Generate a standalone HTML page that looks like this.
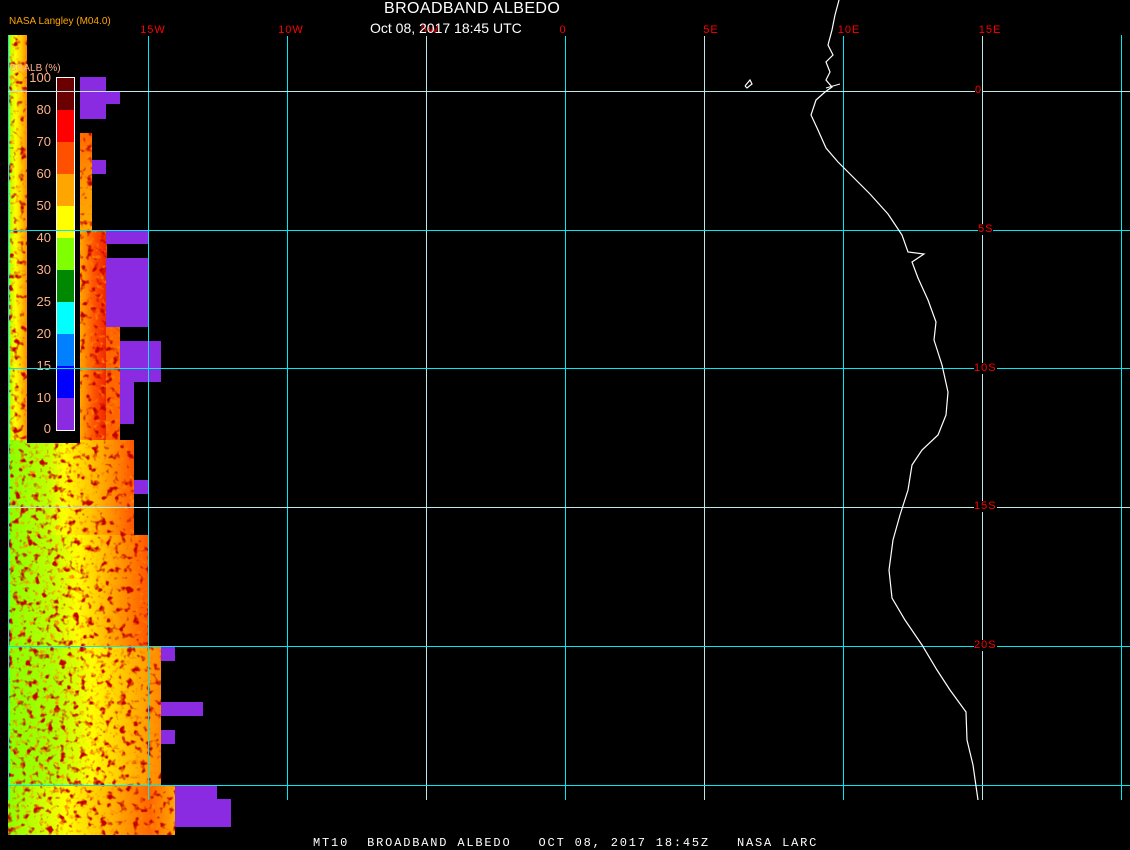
<!DOCTYPE html>
<html><head><meta charset="utf-8"><style>
html,body{margin:0;padding:0;background:#000;}
body{width:1130px;height:850px;position:relative;overflow:hidden;font-family:"Liberation Sans",sans-serif;}
.a{position:absolute;}
.v{position:absolute;top:35px;height:765px;width:1px;}
.h{position:absolute;left:8px;right:0;height:1px;}
.c{background:#00e8f0;}
.l{background:#b8e8ec;}
.lab{position:absolute;color:#f00;font-size:11px;background:#000;line-height:11px;transform:translateX(-50%);letter-spacing:1px;}
.rl{position:absolute;color:#f00;font-size:11px;background:#000;line-height:11px;letter-spacing:1px;}
.pu{position:absolute;background:#8a2be2;}
.leg div{height:32px;}
.ln{position:absolute;color:#ffb088;font-size:13px;text-align:right;width:32px;left:19px;}
</style></head><body>
<div class="a" style="left:8px;top:35px;width:19px;height:405px;background:linear-gradient(90deg,#9f0,#ff0 40%,#fc0 70%,#f80);"></div>
<div class="a" style="left:80px;top:133px;width:12px;height:100px;background:linear-gradient(#f60,#f90 50%,#fa0);"></div>
<div class="a" style="left:80px;top:230px;width:27px;height:210px;background:linear-gradient(90deg,#fa0,#f50 50%,#e20);"></div>
<div class="a" style="left:106px;top:327px;width:14px;height:113px;background:#f60;"></div>
<div class="a" style="left:8px;top:440px;width:126px;height:96px;background:linear-gradient(90deg,#8f0,#bf0 30%,#ff0 45%,#fa0 75%,#f50);"></div>
<div class="a" style="left:8px;top:535px;width:140px;height:112px;background:linear-gradient(90deg,#8f0,#bf0 30%,#ff0 50%,#fa0 75%,#f50);"></div>
<div class="a" style="left:8px;top:646px;width:153px;height:140px;background:linear-gradient(90deg,#8f0,#af0 30%,#ff0 55%,#fb0 80%,#f80);"></div>
<div class="a" style="left:8px;top:785px;width:167px;height:50px;background:linear-gradient(90deg,#8f0,#ff0 35%,#fb0 60%,#f60 85%,#fa0);"></div>
<svg class="a" style="left:0;top:0" width="240" height="850">
<defs>
<filter id="n" x="0" y="0" width="100%" height="100%"><feTurbulence type="fractalNoise" baseFrequency="0.15" numOctaves="2" seed="3"/><feColorMatrix values="0 0 0 0 0.55  0 0 0 0 0  0 0 0 0 0  5 0 0 0 -2.8"/></filter>
<filter id="m" x="0" y="0" width="100%" height="100%"><feTurbulence type="fractalNoise" baseFrequency="0.2" numOctaves="2" seed="8"/><feColorMatrix values="0 0 0 0 1  0 0 0 0 0.25  0 0 0 0 0  4 0 0 0 -2.3"/></filter>
<clipPath id="cp"><path d="M8 35H27V440H8Z M80 133H92V230H107V327H120V440H80Z M8 440H134V535H148V646H161V785H175V835H8Z"/></clipPath>
</defs>
<g clip-path="url(#cp)"><rect x="0" y="0" width="240" height="850" filter="url(#m)"/><rect x="0" y="0" width="240" height="850" filter="url(#n)"/></g>
</svg>
<div class="pu" style="left:80px;top:77px;width:26px;height:42px;"></div>
<div class="pu" style="left:80px;top:91px;width:40px;height:13px;"></div>
<div class="pu" style="left:92px;top:160px;width:14px;height:14px;"></div>
<div class="pu" style="left:106px;top:230px;width:42px;height:14px;"></div>
<div class="pu" style="left:106px;top:258px;width:42px;height:69px;"></div>
<div class="pu" style="left:120px;top:341px;width:41px;height:41px;"></div>
<div class="pu" style="left:120px;top:382px;width:14px;height:42px;"></div>
<div class="pu" style="left:134px;top:480px;width:14px;height:14px;"></div>
<div class="pu" style="left:161px;top:647px;width:14px;height:14px;"></div>
<div class="pu" style="left:161px;top:702px;width:42px;height:14px;"></div>
<div class="pu" style="left:161px;top:730px;width:14px;height:14px;"></div>
<div class="pu" style="left:175px;top:785px;width:42px;height:42px;"></div>
<div class="pu" style="left:175px;top:799px;width:56px;height:28px;"></div>
<div class="a" style="left:27px;top:60px;width:53px;height:383px;background:#000;"></div>
<div class="a" style="left:10px;top:63px;color:#ffb088;font-size:10px;">BBALB (%)</div>
<div class="a leg" style="left:56px;top:77px;width:17px;border:1px solid #fff;">
<div style="background:#6b0000"></div><div style="background:#f00"></div><div style="background:#ff5000"></div><div style="background:#ffa500"></div><div style="background:#ff0"></div><div style="background:#80ff00"></div><div style="background:#008800"></div><div style="background:#0ff"></div><div style="background:#0080ff"></div><div style="background:#0000ff"></div><div style="background:#8a2be2"></div>
</div>
<div class="ln" style="top:70px;">100</div><div class="ln" style="top:102px;">80</div><div class="ln" style="top:134px;">70</div><div class="ln" style="top:166px;">60</div><div class="ln" style="top:198px;">50</div><div class="ln" style="top:230px;">40</div><div class="ln" style="top:262px;">30</div><div class="ln" style="top:294px;">25</div><div class="ln" style="top:326px;">20</div><div class="ln" style="top:358px;">15</div><div class="ln" style="top:390px;">10</div><div class="ln" style="top:421px;">0</div>
<div class="v c" style="left:8px;top:35px;"></div>
<div class="v c" style="left:148px;"></div><div class="v c" style="left:287px;"></div><div class="v l" style="left:426px;"></div><div class="v c" style="left:565px;"></div><div class="v l" style="left:704px;"></div><div class="v c" style="left:843px;"></div><div class="v l" style="left:982px;"></div><div class="v c" style="left:1121px;"></div>
<div class="h l" style="top:91px;"></div><div class="h c" style="top:230px;"></div><div class="h c" style="top:368px;"></div><div class="h l" style="top:507px;"></div><div class="h c" style="top:646px;"></div><div class="h c" style="top:785px;"></div>
<svg class="a" style="left:0;top:0" width="1130" height="850"><polyline fill="none" stroke="#fff" stroke-width="1.2" points="839,0 835,15 832,30 828,45 833,55 826,62 830,72 826,80 832,87 825,92 816,100 811,115 818,130 826,148 838,162 852,176 870,194 888,214 902,235 908,252 924,254 912,262 918,278 928,300 936,322 934,340 942,365 948,392 946,415 938,435 922,450 912,465 908,490 900,515 893,540 889,570 892,598 905,620 922,645 937,670 950,690 966,712 967,740 973,765 978,800"/><polyline fill="none" stroke="#fff" stroke-width="1.2" points="745,86 750,80 752,84 747,88 745,86"/><polyline fill="none" stroke="#fff" points="826,88 840,84"/></svg>
<div class="lab" style="left:153px;top:25px;">15W</div><div class="lab" style="left:291px;top:25px;">10W</div><div class="lab" style="left:430px;top:25px;">5W</div><div class="lab" style="left:563px;top:25px;">0</div><div class="lab" style="left:711px;top:25px;">5E</div><div class="lab" style="left:849px;top:25px;">10E</div><div class="lab" style="left:990px;top:25px;">15E</div>
<div class="rl" style="left:975px;top:85px;">0</div><div class="rl" style="left:978px;top:224px;">5S</div><div class="rl" style="left:974px;top:363px;">10S</div><div class="rl" style="left:974px;top:501px;">15S</div><div class="rl" style="left:974px;top:640px;">20S</div>
<div class="a" style="left:9px;top:16px;color:#ffa500;font-size:10px;">NASA Langley (M04.0)</div>
<div class="a" style="left:384px;top:0px;color:#fff;font-size:16px;letter-spacing:.4px;">BROADBAND ALBEDO</div>
<div class="a" style="left:370px;top:20px;color:#fff;font-size:14px;">Oct 08, 2017 18:45 UTC</div>
<div class="a" style="left:313px;top:836px;color:#fff;font-size:12px;font-family:'Liberation Mono',monospace;white-space:pre;letter-spacing:1.82px;">MT10  BROADBAND ALBEDO   OCT 08, 2017 18:45Z   NASA LARC</div>
</body></html>
